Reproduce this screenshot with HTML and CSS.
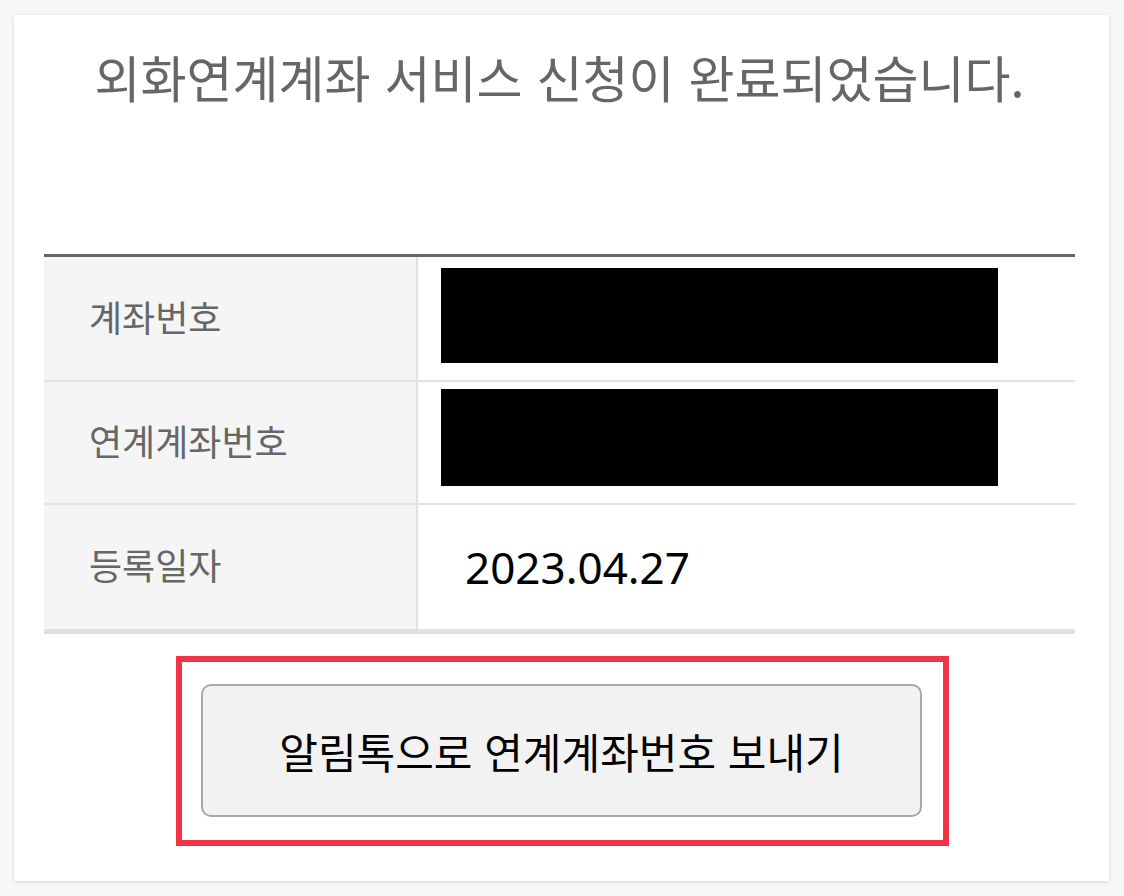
FILE: index.html
```html
<!DOCTYPE html>
<html lang="ko">
<head>
<meta charset="utf-8">
<title>외화연계계좌 서비스 신청 완료</title>
<link rel="stylesheet" href="styles.css">
</head>
<body>
<div class="card">
  <h1 class="title">외화연계계좌 서비스 신청이 완료되었습니다.</h1>
  <div class="table">
    <div class="row r-acct">
      <div class="label">계좌번호</div>
      <div class="value"><div class="redact r1"></div></div>
    </div>
    <div class="row r-link">
      <div class="label">연계계좌번호</div>
      <div class="value"><div class="redact r2"></div></div>
    </div>
    <div class="row last">
      <div class="label">등록일자</div>
      <div class="value date">2023.04.27</div>
    </div>
  </div>
  <div class="actions">
    <div class="highlight">
      <button class="btn" type="button">알림톡으로 연계계좌번호 보내기</button>
    </div>
  </div>
</div>
</body>
</html>
```
FILE: styles.css
```css
* { box-sizing: border-box; }
html, body { margin: 0; padding: 0; }
body {
  background: #f7f7f7;
  font-family: "Noto Sans CJK KR", "Noto Sans", sans-serif;
  width: 1124px;
  height: 896px;
  overflow: hidden;
  padding-top: 15px;
  padding-left: 14px;
}
.card {
  width: 1095px;
  height: 866px;
  background: #fff;
  box-shadow: 0 1px 4px rgba(0,0,0,0.14);
  padding: 0 34px 0 30px;
}
.title {
  margin: 0;
  padding-top: 31px;
  height: 239px;
  text-align: center;
  font-size: 50px;
  font-weight: 400;
  color: #666;
  line-height: 60px;
  letter-spacing: 0;
  white-space: nowrap;
}
.table {
  border-top: 3px solid #666;
}
.row {
  display: flex;
  height: 125px;
  border-bottom: 2px solid #e2e2e2;
}
.row.r-link { height: 123px; }
.row.last {
  height: 129px;
  border-bottom: 5px solid #e0e0e0;
}
.label {
  width: 374px;
  flex: none;
  background: #f5f5f5;
  border-right: 2px solid #e2e2e2;
  display: flex;
  align-items: center;
  padding-left: 45px;
  padding-bottom: 6px;
  font-size: 36px;
  color: #666;
}
.value {
  flex: 1;
  display: flex;
  align-items: flex-start;
  padding-left: 23px;
}
.redact { background: #000; width: 557px; }
.r1 { height: 95px; margin-top: 11px; }
.r2 { height: 97px; margin-top: 7px; }
.date {
  align-items: center;
  padding-left: 47px;
  font-size: 44px;
  color: #000;
  font-family: "Noto Sans", sans-serif;
}
.actions {
  display: flex;
  justify-content: center;
  padding-top: 22px;
  padding-left: 6px;
}
.highlight {
  border: 6px solid #f23447;
  padding: 22px 21px 23px 19px;
}
.btn {
  display: flex;
  align-items: center;
  justify-content: center;
  width: 721px;
  height: 133px;
  border: 2px solid #a8a8a8;
  border-radius: 10px;
  background: #f2f2f2;
  font-family: "Noto Sans CJK KR", "Noto Sans", sans-serif;
  font-size: 42px;
  color: #000;
  padding: 0;
}
```
